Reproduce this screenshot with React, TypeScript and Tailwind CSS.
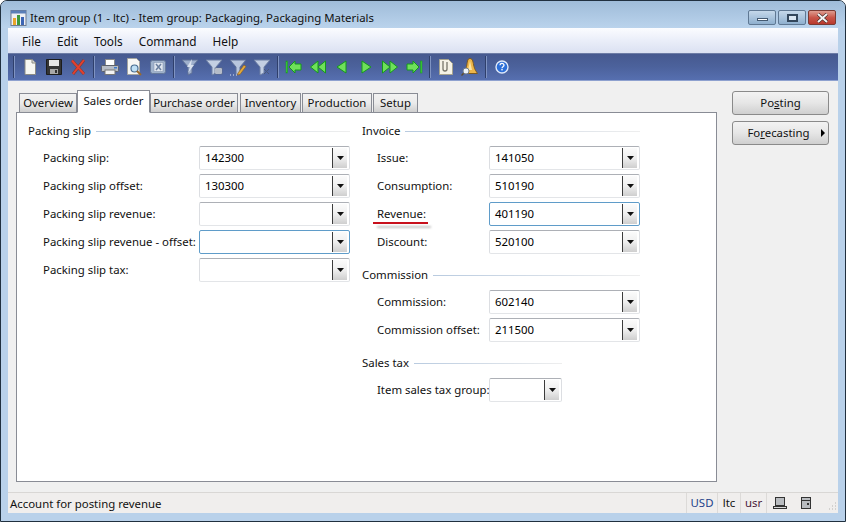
import type { ReactNode } from "react"

const Sep = () => <div className="mx-[3px] h-[22px] w-[2px] border-l border-r border-l-[#2f3f6b] border-r-[#7f93c2]" />

const Tool = ({ children }: { children: ReactNode }) => (
  <div className="flex h-6 w-6 items-center justify-center">
    <svg width="20" height="20" viewBox="0 0 20 20">
      {children}
    </svg>
  </div>
)

const funnel = "M2 3h16l-6 7v6l-4 2v-8z"

const green = { fill: "#6fe05a", stroke: "#159a1b", strokeLinejoin: "round" as const }

const toolbar: ReactNode[] = [
  <Sep key="s1" />,
  <Tool key="new">
    <path d="M5 2.500h7l3.500 3.500v11.500H5z" fill="#f7f7f2" stroke="#8b8b84" />
    <path d="M12 2.500V6h3.500" fill="#dcdcd4" stroke="#8b8b84" />
  </Tool>,
  <Tool key="save">
    <path d="M2.500 2.500h15v15h-15z" fill="#343434" stroke="#1c1c1c" />
    <rect x="5" y="3" width="10" height="6" fill="#e6e6e6" />
    <rect x="6" y="12" width="8" height="5" fill="#a8a8a8" />
    <rect x="11" y="13" width="2" height="3" fill="#333" />
  </Tool>,
  <Tool key="delete">
    <path d="M4 3.500L16 17M16 3L5 17" fill="none" stroke="#7a3b3b" strokeWidth="3" />
    <path d="M4 3.500L16 17M16 3L5 17" fill="none" stroke="#e2402e" strokeWidth="2" />
  </Tool>,
  <Sep key="s2" />,
  <Tool key="print">
    <rect x="5.500" y="2.500" width="9" height="6" fill="#fff" stroke="#8a8a8a" />
    <rect x="1.500" y="8.500" width="17" height="6" rx="1" fill="#b7bcc6" stroke="#5d616a" />
    <rect x="5" y="13" width="10" height="4.500" fill="#f4f4f4" stroke="#777" />
    <rect x="14" y="10" width="3" height="1.500" fill="#3a78c9" />
  </Tool>,
  <Tool key="preview">
    <path d="M3.500 1.500h9l3 3v13h-12z" fill="#f7f7f4" stroke="#a4a4a0" />
    <circle cx="10.500" cy="11.500" r="3.500" fill="#bfe0f5" stroke="#4a6f92" strokeWidth="1.200" />
    <path d="M13 14l4 4" stroke="#9c6a2a" strokeWidth="2" />
  </Tool>,
  <Tool key="excel">
    <rect x="2.500" y="3.500" width="15" height="13" rx="2" fill="#9fb2cc" stroke="#66799a" />
    <rect x="6" y="5.500" width="9" height="9" fill="#dfe6ef" stroke="#7f90aa" strokeWidth="0.500" />
    <path d="M8 7l5 6M13 7l-5 6" stroke="#6a7f9f" strokeWidth="1.500" />
  </Tool>,
  <Sep key="s3" />,
  <Tool key="f1">
    <path d={funnel} fill="#9fb0cd" stroke="#5f7197" />
    <path d="M12 2l-5 8h3l-2 6 6-8h-3z" fill="#d9e1ee" />
  </Tool>,
  <Tool key="f2">
    <path d={funnel} fill="#c3cfe3" stroke="#6d7fa4" />
    <rect x="11" y="11" width="7" height="6" fill="#e4e8f0" stroke="#5f6a80" strokeWidth="0.700" />
    <path d="M12 13h5M12 15h5" stroke="#5f6a80" strokeWidth="0.700" />
  </Tool>,
  <Tool key="f3">
    <path d={funnel} fill="#b8c6de" stroke="#5f7197" />
    <path d="M10 16l6-8 2 1.500-6 8-2.500.5z" fill="#e2a93a" stroke="#8a5a1e" strokeWidth="0.600" />
    <path d="M2 18h1M5 18h1M8 18h1" stroke="#dfe6f2" strokeWidth="1.200" />
  </Tool>,
  <Tool key="f4">
    <path d={funnel} fill="#c3cfe3" stroke="#6d7fa4" />
    <path d="M12 12l5 5M17 12l-5 5" stroke="#48587a" strokeWidth="1" />
  </Tool>,
  <Sep key="s4" />,
  <Tool key="n1">
    <rect x="2" y="4" width="1.500" height="12" fill="#3ccf38" stroke="#159a1b" strokeWidth="0.500" />
    <path d="M5 10l6-6v3h6v6h-6v3z" {...green} />
  </Tool>,
  <Tool key="n2">
    <path d="M2.500 10l7.500-6v12zM10 10l7.500-6v12z" {...green} />
  </Tool>,
  <Tool key="n3">
    <path d="M5 10l9-6v12z" {...green} />
  </Tool>,
  <Tool key="n4">
    <path d="M15 10L6 4v12z" {...green} />
  </Tool>,
  <Tool key="n5">
    <path d="M2.500 4L10 10l-7.500 6zM10 4l7.500 6-7.500 6z" {...green} />
  </Tool>,
  <Tool key="n6">
    <path d="M15 10L9 4v3H3v6h6v3z" {...green} />
    <rect x="16.500" y="4" width="1.500" height="12" fill="#3ccf38" stroke="#159a1b" strokeWidth="0.500" />
  </Tool>,
  <Sep key="s5" />,
  <Tool key="attach">
    <path d="M3.500 2.500h9l4 4v11h-13z" fill="#f4f2e6" stroke="#a6a38e" />
    <path d="M7 4v8a2 2 0 0 0 4 0V5" fill="none" stroke="#77756a" strokeWidth="1.300" />
  </Tool>,
  <Tool key="alert">
    <path d="M10 1.500c3 0 3 4 4 8 .5 3 3 6 3.500 7H3c1-1 3-4 3.500-7 1-4 .5-8 3.500-8z" fill="#edb64a" stroke="#7d5a1f" />
    <path d="M10 4l2 9H8z" fill="#fbe6a6" />
    <circle cx="6" cy="14" r="3" fill="#eef3f8" stroke="#737f8c" />
    <path d="M3.500 16.500L1.500 18.500" stroke="#5a4a30" strokeWidth="1.500" />
  </Tool>,
  <Sep key="s6" />,
  <Tool key="help">
    <circle cx="10" cy="10" r="6" fill="#2d6fd8" stroke="#dfe9fa" strokeWidth="1.400" />
    <path d="M8 8.200a2 1.800 0 1 1 3 1.500c-.7.500-1 .8-1 1.500" fill="none" stroke="#fff" strokeWidth="1.300" />
    <rect x="9.300" y="12" width="1.400" height="1.400" fill="#fff" />
  </Tool>,
]

const Arrow = () => (
  <svg width="7" height="4" viewBox="0 0 7 4" className="block">
    <path d="M0 0h7L3.500 4z" fill="#111" />
  </svg>
)

const Combo = ({ value = "", focused = false, small = false }: { value?: string; focused?: boolean; small?: boolean }) => (
  <div
    className={`flex h-6 items-center rounded-[2px] border bg-white ${small ? "w-[73px]" : "w-[151px]"} ${
      focused ? "border-[#5f9cc9]" : "border-t-[#adb0b6] border-x-[#dcdee2] border-b-[#e3e5e8]"
    }`}
  >
    <span className="flex-1 pl-[5px] text-black">{value}</span>
    <div className="my-[1px] mr-[2px] flex h-5 w-[15px] items-center justify-center border-l border-l-[#3c3c3c] bg-gradient-to-b from-[#fbfbfb] via-[#efefef] to-[#cfcfcf]">
      <Arrow />
    </div>
  </div>
)

const Row = ({ label, labelW, value, focused, small }: { label: string; labelW: string; value?: string; focused?: boolean; small?: boolean }) => (
  <div className="mb-1 flex h-6 items-center">
    <div className={`${labelW} whitespace-nowrap pl-[15px]`}>{label}</div>
    <Combo value={value} focused={focused} small={small} />
  </div>
)

const Heading = ({ title, width, className = "" }: { title: string; width: string; className?: string }) => (
  <div className={`flex h-4 items-center gap-[5px] ${width} ${className}`}>
    <span className="whitespace-nowrap">{title}</span>
    <div className="h-[1px] flex-1 bg-gradient-to-r from-[#b9cbe0] to-[#eeeeee]" />
  </div>
)

const tabs = [
  { name: "Overview", cls: "w-[58px]" },
  { name: "Sales order", cls: "w-[73px]", active: true },
  { name: "Purchase order", cls: "w-[88px]" },
  { name: "Inventory", cls: "ml-[2px] w-[61px]" },
  { name: "Production", cls: "ml-[1px] w-[70px]" },
  { name: "Setup", cls: "ml-[1px] w-[45px]" },
]

const App = () => {
  return (
    <div
      className="flex h-[522px] w-[846px] flex-col overflow-hidden rounded-t-[7px] border border-[#20303f] bg-[#b9d1ea] text-[11.400px] leading-4 text-[#111]"
      style={{ fontFamily: '"Noto Sans", sans-serif' }}
    >
      <div className="flex h-[27px] shrink-0 items-center bg-gradient-to-b from-[#9fbcd9] to-[#bad3ec] pl-[9px] pr-[9px] pt-[6px]">
        <svg width="18" height="18" viewBox="0 0 18 18" className="mr-[2px]">
          <rect x="1" y="1.500" width="15" height="15" fill="#eef0f4" stroke="#6d7b90" />
          <rect x="1" y="1.500" width="15" height="3" fill="#5a7fb8" />
          <rect x="3" y="9" width="3" height="7" fill="#e8a52a" />
          <rect x="7" y="6" width="3" height="10" fill="#3f9a3c" />
          <rect x="11" y="8" width="3" height="8" fill="#3c65b4" />
        </svg>
        <span className="flex-1 truncate">Item group (1 - ltc) - Item group: Packaging, Packaging Materials</span>
        <div className="flex gap-[2px]">
          <div className="flex h-[15px] w-[28px] items-end justify-center rounded-[2px] border border-[#5f7893] bg-gradient-to-b from-[#c5d8ea] to-[#8fb0cf] pb-[3px]">
            <div className="h-[3px] w-[11px] border border-[#445a72] bg-white" />
          </div>
          <div className="flex h-[15px] w-[28px] items-center justify-center rounded-[2px] border border-[#5f7893] bg-gradient-to-b from-[#c5d8ea] to-[#8fb0cf]">
            <div className="h-[8px] w-[11px] border-2 border-[#33475c] bg-[#d9e6f2]" />
          </div>
          <div className="flex h-[15px] w-[28px] items-center justify-center rounded-[2px] border border-[#7a3a32] bg-gradient-to-b from-[#dd9c90] via-[#c9564a] to-[#b8392d]">
            <svg width="13" height="10" viewBox="0 0 13 10">
              <path d="M2 1l9 8M11 1l-9 8" stroke="#3d2a28" strokeWidth="3.200" />
              <path d="M2 1l9 8M11 1l-9 8" stroke="#f4f4f4" strokeWidth="2" />
            </svg>
          </div>
        </div>
      </div>

      <div className="mx-[7px] flex min-h-0 flex-1 flex-col">
        <div className="flex h-[25px] shrink-0 items-center gap-[16px] bg-gradient-to-b from-[#fbfcff] via-[#eaeef9] to-[#dbe1f2] pl-[14px] text-[11.800px]">
          <span>File</span>
          <span>Edit</span>
          <span>Tools</span>
          <span>Command</span>
          <span>Help</span>
        </div>

        <div className="flex h-[28px] shrink-0 items-center border-t border-t-[#6d7ca6] border-b border-b-[#8ea1cf] bg-gradient-to-b from-[#46598f] via-[#4c629c] to-[#566fb0] pl-[2px]">
          {toolbar}
        </div>

        <div className="flex min-h-0 flex-1 bg-[#f0f0f0] pl-[8px] pr-[9px] pt-[9px]">
          <div className="flex w-[701px] flex-col">
            <div className="flex h-[22px] shrink-0 items-end pl-[3px]">
              {tabs.map((tab) => (
                <div
                  key={tab.name}
                  className={`flex items-center justify-center whitespace-nowrap border border-[#898c95] ${tab.cls} ${
                    tab.active
                      ? "relative z-10 -mb-[1px] h-[23px] border-b-white bg-white pb-[2px]"
                      : "h-[19px] border-b-0 bg-gradient-to-b from-[#f2f2f2] via-[#ebebeb] to-[#cfcfcf]"
                  }`}
                >
                  {tab.name}
                </div>
              ))}
            </div>
            <div className="flex h-[370px] border border-[#898c95] bg-white pl-[11px] pt-[10px]">
              <div className="w-[334px]">
                <Heading title="Packing slip" width="w-[322px]" className="mb-[7px]" />
                <Row label="Packing slip:" labelW="w-[171px]" value="142300" />
                <Row label="Packing slip offset:" labelW="w-[171px]" value="130300" />
                <Row label="Packing slip revenue:" labelW="w-[171px]" />
                <Row label="Packing slip revenue - offset:" labelW="w-[171px]" focused />
                <Row label="Packing slip tax:" labelW="w-[171px]" />
              </div>
              <div>
                <Heading title="Invoice" width="w-[278px]" className="mb-[7px]" />
                <Row label="Issue:" labelW="w-[127px]" value="141050" />
                <Row label="Consumption:" labelW="w-[127px]" value="510190" />
                <div className="relative">
                  <Row label="Revenue:" labelW="w-[127px]" value="401190" focused />
                  <div className="absolute left-[11px] top-[20px] h-[2px] w-[55px] bg-[#c8101c]" />
                  <div className="absolute left-[15px] top-[24px] h-[2px] w-[54px] bg-[#c4c4c4] blur-[1px]" />
                </div>
                <Row label="Discount:" labelW="w-[127px]" value="520100" />
                <Heading title="Commission" width="w-[278px]" className="mb-[7px] mt-[13px]" />
                <Row label="Commission:" labelW="w-[127px]" value="602140" />
                <Row label="Commission offset:" labelW="w-[127px]" value="211500" />
                <Heading title="Sales tax" width="w-[200px]" className="mb-[7px] mt-[13px]" />
                <Row label="Item sales tax group:" labelW="w-[127px]" small />
              </div>
            </div>
          </div>
          <div className="ml-[15px] mt-[1px] flex flex-col gap-[6px]">
            <div className="flex h-[24px] w-[97px] items-center justify-center rounded-[3px] border border-[#8a8a8a] bg-gradient-to-b from-[#f3f3f3] via-[#e6e6e6] to-[#cfcfcf]">
              <span>
                Po<u>s</u>ting
              </span>
            </div>
            <div className="relative flex h-[24px] w-[97px] items-center justify-center rounded-[3px] border border-[#8a8a8a] bg-gradient-to-b from-[#f3f3f3] via-[#e6e6e6] to-[#cfcfcf] pr-[4px]">
              <span>
                Fo<u>r</u>ecasting
              </span>
              <div className="absolute right-[3px] top-[7px] h-0 w-0 border-y-[4px] border-l-[4px] border-y-transparent border-l-black" />
            </div>
          </div>
        </div>

        <div className="flex h-[21px] shrink-0 items-center border-t border-t-[#d9d7d5] bg-[#f0eeed]">
          <div className="flex-1 pl-[2px] pt-[1px]">Account for posting revenue</div>
          <div className="flex h-full w-[31px] items-center justify-center border-l border-[#dcdad8] text-[#1c3f8a]">USD</div>
          <div className="flex h-full w-[23px] items-center justify-center border-l border-[#dcdad8]">ltc</div>
          <div className="flex h-full w-[26px] items-center justify-center border-l border-[#dcdad8] text-[#4a1a3a]">usr</div>
          <div className="flex h-full w-[26px] items-center justify-center border-l border-[#dcdad8]">
            <svg width="14" height="14" viewBox="0 0 14 14">
              <rect x="2.500" y="1.500" width="9" height="8" fill="#b9bcc0" stroke="#333" />
              <rect x="0.500" y="10.500" width="13" height="2" fill="#d8d8d8" stroke="#333" />
            </svg>
          </div>
          <div className="flex h-full w-[28px] items-center justify-center">
            <svg width="12" height="14" viewBox="0 0 12 14">
              <rect x="1.500" y="1.500" width="9" height="11" fill="#b9bcc0" stroke="#333" />
              <path d="M2 4.500h8" stroke="#333" />
              <rect x="7" y="7" width="2" height="2" fill="#333" />
            </svg>
          </div>
          <svg width="18" height="12" viewBox="0 0 18 12" className="mt-[8px] shrink-0">
            <path d="M15 2h1M12 5h1M15 5h1M9 8h1M12 8h1M15 8h1" stroke="#b5b3b0" />
          </svg>
        </div>
      </div>
      <div className="h-2 shrink-0" />
    </div>
  )
}

export default App
